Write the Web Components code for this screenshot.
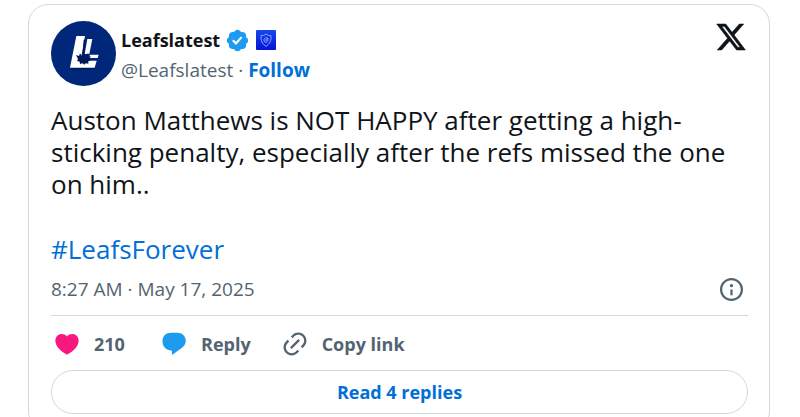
<!DOCTYPE html>
<html lang="en">
<head>
<meta charset="utf-8">
<title>Leafslatest on X</title>
<style>
  html { background: #fff; }
  body {
    margin: 4px 30px 4px 28px;
    font-family: "Segoe UI", "Open Sans", "Noto Sans", sans-serif;
    color: #0f1419;
    --muted: #536471;
    --link: #006fd6;
    --line: #cfd9de;
  }
</style>
</head>
<body>
<post-card>
  <post-author slot="header" name="Leafslatest" handle="@Leafslatest"></post-author>
  <post-text slot="body">
    Auston Matthews is NOT HAPPY after getting a high-sticking penalty, especially after the refs missed the one on him..
    <a slot="tag" href="#LeafsForever">#LeafsForever</a>
  </post-text>
  <post-meta slot="meta">8:27 AM · May 17, 2025</post-meta>
  <post-action slot="actions" icon="heart">210</post-action>
  <post-action slot="actions" icon="reply">Reply</post-action>
  <post-action slot="actions" icon="link">Copy link</post-action>
  <replies-link slot="footer">Read 4 replies</replies-link>
</post-card>

<script>
const ICONS = {
  x: 'M18.244 2.25h3.308l-7.227 8.26 8.502 11.24H16.17l-5.214-6.817L4.99 21.75H1.68l7.73-8.835L1.254 2.25H8.08l4.713 6.231zm-1.161 17.52h1.833L7.084 4.126H5.117z',
  verified: 'M22.25 12c0-1.43-.88-2.67-2.19-3.34.46-1.39.2-2.9-.81-3.91s-2.52-1.27-3.91-.81c-.66-1.31-1.91-2.19-3.34-2.19s-2.67.88-3.33 2.19c-1.4-.46-2.91-.2-3.92.81s-1.26 2.52-.8 3.91c-1.31.67-2.2 1.91-2.2 3.34s.89 2.67 2.2 3.34c-.46 1.39-.21 2.9.8 3.91s2.52 1.26 3.91.81c.67 1.31 1.91 2.19 3.34 2.19s2.68-.88 3.34-2.19c1.39.45 2.9.2 3.91-.81s1.27-2.52.81-3.91c1.31-.67 2.19-1.91 2.19-3.34zm-11.71 4.2L6.8 12.46l1.41-1.42 2.26 2.26 4.8-5.23 1.47 1.36-6.2 6.77z',
  heart: 'M20.884 13.19c-1.351 2.48-4.001 5.12-8.379 7.67l-.503.3-.504-.3c-4.379-2.55-7.029-5.19-8.382-7.67-1.36-2.5-1.41-4.86-.514-6.67.887-1.79 2.647-2.91 4.601-3.01 1.651-.09 3.368.56 4.798 2.01 1.429-1.45 3.146-2.1 4.796-2.01 1.954.1 3.714 1.22 4.601 3.01.896 1.81.846 4.17-.514 6.67z',
  reply: 'M9.6 2.3h4.8c4.7 0 7.7 2.9 7.7 7 0 2.9-1.6 5-4.3 6.8-2 1.4-4.600 3.300-6.700 4.800-.4.3-.9.1-.9-.4v-2.800c-5-.2-8.1-3.500-8.100-8.200 0-4.300 3-7.200 7.500-7.200z',
  link: 'M18.36 5.64c-1.95-1.96-5.11-1.96-7.07 0L9.88 7.05 8.46 5.64l1.42-1.42c2.73-2.73 7.16-2.73 9.9 0 2.73 2.74 2.73 7.17 0 9.9l-1.42 1.42-1.41-1.42 1.41-1.41c1.96-1.96 1.96-5.12 0-7.07zm-2.12 3.53l-7.07 7.07-1.41-1.41 7.07-7.07 1.41 1.41zm-12.02.71l1.42-1.42 1.41 1.42-1.41 1.41c-1.96 1.96-1.96 5.12 0 7.07 1.95 1.96 5.11 1.96 7.07 0l1.41-1.41 1.42 1.41-1.42 1.42c-2.73 2.73-7.16 2.73-9.9 0-2.73-2.74-2.73-7.17 0-9.9z',
  info: 'M13.5 8.5c0 .83-.67 1.5-1.5 1.5s-1.5-.67-1.5-1.5S11.17 7 12 7s1.5.67 1.5 1.5zM13 17v-5h-2v5h2zm-1 5.25c5.66 0 10.25-4.59 10.25-10.25S17.66 1.75 12 1.75 1.75 6.34 1.75 12 6.34 22.25 12 22.25zM20.25 12c0 4.56-3.69 8.25-8.25 8.25S3.75 16.56 3.75 12 7.44 3.75 12 3.75s8.25 3.69 8.25 8.25z'
};

const define = (name, render) => customElements.define(name, class extends HTMLElement {
  connectedCallback() {
    if (this.shadowRoot) return;
    const root = this.attachShadow({ mode: 'open' });
    const template = document.createElement('template');
    template.innerHTML = render(this);
    root.append(template.content.cloneNode(true));
  }
});

define('ui-icon', el => `
  <style>
    :host { display: inline-flex; flex: none; width: 28px; height: 28px; }
    svg { width: 100%; height: 100%; fill: currentColor; }
    :host([name="x"]) svg { stroke: currentColor; stroke-width: .4; }
  </style>
  <svg viewBox="0 0 24 24" aria-hidden="true"><path d="${ICONS[el.getAttribute('name')]}"/></svg>`);

define('team-avatar', () => `
  <style>
    :host { display: block; flex: none; width: 65px; height: 65px; }
    svg { display: block; width: 100%; height: 100%; }
  </style>
  <svg viewBox="0 0 195 195" aria-hidden="true">
    <circle cx="97.5" cy="97.5" r="97.5" fill="#00277a"/>
    <path d="M78 49h24l-12 74h45l-4 22H59z" fill="#001a55"/>
    <path d="M76 45h26l-13 74h48l-6 21H57zM109 54h15l-9 45h-14zM117 101h26l-3 10h-27z" fill="#fff"/>
    <path d="M98 56h7l-5 44 4 4 8-9-1 12 8-2-3 8 3 5-7 3v7l-8-1-4 4-5-4-8 2-1-7-8-3 3-5-6-12 9 3 3-8 6 8 2-5z" fill="#001b5c"/>
  </svg>`);

define('affiliate-badge', () => `
  <style>
    :host { display: block; flex: none; width: 20px; height: 20px; }
    svg { display: block; width: 100%; height: 100%; }
  </style>
  <svg viewBox="0 0 60 60" aria-hidden="true">
    <defs><linearGradient id="g" x2="0" y2="1"><stop stop-color="#1747ee"/><stop offset="1" stop-color="#0413d2"/></linearGradient></defs>
    <rect width="60" height="60" rx="3" fill="url(#g)"/>
    <g fill="none" stroke="#a9baff" stroke-width="2.5">
      <path d="M30 12c5 4 10 5 15 5 1 15-4 25-15 32-11-7-16-17-15-32 5 0 10-1 15-5z"/>
      <path d="M34 36c-6 3-11-1-10-7 1-7 11-8 12-2 1 5-3 8-5 5-2-4 2-8 5-5"/>
    </g>
  </svg>`);

define('post-author', el => `
  <style>
    :host { display: flex; align-items: flex-start; }
    .names { flex: 1; margin-left: 5px; padding-top: 4px; font-size: 19px; line-height: 30px; min-width: 0; }
    .row { display: flex; align-items: center; }
    a { text-decoration: none; color: inherit; }
    .name { font-weight: 700; font-size: 18px; }
    .badge { width: 25px; height: 25px; margin: 0 6px 0 5px; color: #1d9bf0; }
    .muted { color: var(--muted); white-space: pre; }
    .follow { color: var(--link); font-weight: 700; }
    .x { margin-right: 1px; }
    .x ui-icon { width: 32px; height: 32px; }
  </style>
  <a href="#profile" aria-label="Leafslatest profile"><team-avatar></team-avatar></a>
  <div class="names">
    <div class="row"><a class="name" href="#profile">${el.getAttribute('name')}</a><ui-icon class="badge" name="verified"></ui-icon><affiliate-badge></affiliate-badge></div>
    <div class="row"><a class="muted" href="#profile">${el.getAttribute('handle')}</a><span class="muted"> · </span><a class="follow" href="#follow">Follow</a></div>
  </div>
  <a class="x" href="#post" aria-label="View on X"><ui-icon name="x"></ui-icon></a>`);

define('post-text', () => `
  <style>
    :host { display: block; margin-top: 18px; font-size: 26px; line-height: 32px; }
    p { margin: 0 0 33px; }
    ::slotted(a) { color: var(--link); text-decoration: none; }
  </style>
  <p><slot></slot></p>
  <slot name="tag"></slot>`);

define('post-meta', () => `
  <style>
    :host { display: flex; justify-content: space-between; align-items: center; margin-top: 9px; padding-bottom: 11px;
      border-bottom: 1px solid var(--line); color: var(--muted); font-size: 19px; line-height: 30px; }
    a { color: inherit; text-decoration: none; }
    .info { display: flex; margin-right: 3px; }
    .info ui-icon { width: 27px; height: 27px; }
  </style>
  <a href="#post"><slot></slot></a>
  <a class="info" href="#info" aria-label="Ads info and privacy"><ui-icon name="info"></ui-icon></a>`);

define('post-action', el => `
  <style>
    :host { display: block; min-width: 77px; }
    button { display: flex; align-items: center; gap: 13px; padding: 0; border: 0; background: none; cursor: pointer;
      font-family: inherit; font-size: 18px; font-weight: 700; line-height: 28px; color: var(--muted); }
    .heart { color: #f91880; }
    .reply { color: #1d9bf0; }
  </style>
  <button type="button"><ui-icon class="${el.getAttribute('icon')}" name="${el.getAttribute('icon')}"></ui-icon><slot></slot></button>`);

define('replies-link', () => `
  <style>
    :host { display: block; }
    a { display: block; border: 1px solid var(--line); border-radius: 22px; text-align: center; color: var(--link);
      text-decoration: none; font-weight: 700; font-size: 18px; line-height: 42px; }
  </style>
  <a href="#replies"><slot></slot></a>`);

define('post-card', () => `
  <style>
    :host { display: block; border: 1px solid var(--line); border-radius: 20px; padding: 16px 21px 16px 22px; }
    .actions { display: flex; gap: 30px; padding: 14px 0 12px 2px; }
  </style>
  <slot name="header"></slot>
  <slot name="body"></slot>
  <slot name="meta"></slot>
  <div class="actions"><slot name="actions"></slot></div>
  <slot name="footer"></slot>`);
</script>
</body>
</html>
